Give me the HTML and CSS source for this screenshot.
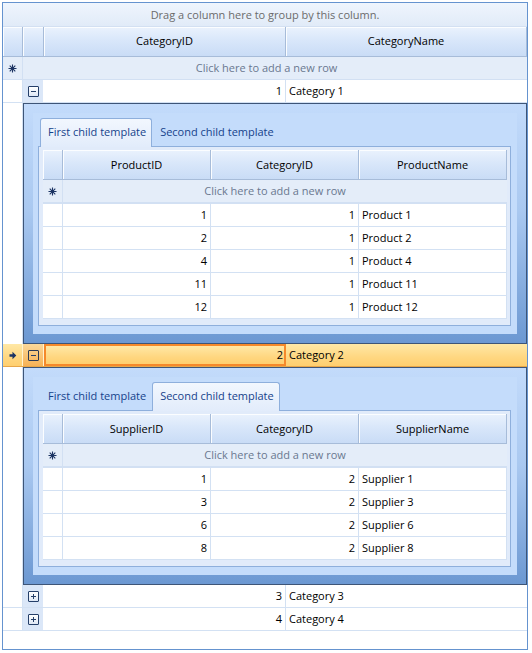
FILE: index.html
```html
<!DOCTYPE html>
<html>
<head>
<meta charset="utf-8">
<link rel="stylesheet" href="styles.css">
</head>
<body>
<div class="grid">
  <div class="group-panel">Drag a column here to group by this column.</div>

  <div class="row hdr">
    <div class="c"></div><div class="c"></div><div class="c">CategoryID</div><div class="c">CategoryName</div>
  </div>

  <div class="row newrow">
    <div class="c ind"><svg class="ast" width="9" height="9" viewBox="0 0 9 9"><path d="M4.5 0.5v8M0.5 4.5h8M1.7 1.7l5.6 5.6M7.3 1.7l-5.6 5.6" stroke="#1c3463" stroke-width="1.1"/><circle cx="4.5" cy="4.5" r="1.3" fill="#1c3463"/></svg></div>
    <div class="c span">Click here to add a new row</div>
  </div>

  <div class="row data">
    <div class="c ind"></div>
    <div class="c exp"><span class="box minus"></span></div>
    <div class="c num">1</div>
    <div class="c txt">Category 1</div>
  </div>

  <div class="detail-row">
    <div class="ind"></div>
    <div class="detail">
      <div class="panel">
        <div class="tabs">
          <div class="tab sel">First child template</div>
          <div class="tab">Second child template</div>
        </div>
        <div class="page">
          <div class="cgrid">
            <div class="crow chdr"><div class="c"></div><div class="c">ProductID</div><div class="c">CategoryID</div><div class="c">ProductName</div></div>
            <div class="crow cnew"><div class="c ind"><svg class="ast" width="9" height="9" viewBox="0 0 9 9"><path d="M4.5 0.5v8M0.5 4.5h8M1.7 1.7l5.6 5.6M7.3 1.7l-5.6 5.6" stroke="#1c3463" stroke-width="1.1"/><circle cx="4.5" cy="4.5" r="1.3" fill="#1c3463"/></svg></div><div class="c span">Click here to add a new row</div></div>
            <div class="crow cdata"><div class="c"></div><div class="c num">1</div><div class="c num">1</div><div class="c txt">Product 1</div></div>
            <div class="crow cdata"><div class="c"></div><div class="c num">2</div><div class="c num">1</div><div class="c txt">Product 2</div></div>
            <div class="crow cdata"><div class="c"></div><div class="c num">4</div><div class="c num">1</div><div class="c txt">Product 4</div></div>
            <div class="crow cdata"><div class="c"></div><div class="c num">11</div><div class="c num">1</div><div class="c txt">Product 11</div></div>
            <div class="crow cdata"><div class="c"></div><div class="c num">12</div><div class="c num">1</div><div class="c txt">Product 12</div></div>
          </div>
        </div>
      </div>
    </div>
  </div>

  <div class="row data selected">
    <div class="c ind"><svg width="8" height="9" viewBox="0 0 8 9"><path d="M0.5 3.3h3V0.8L7.3 4.5 3.5 8.2V5.7h-3z" fill="#1c3463"/></svg></div>
    <div class="c exp"><span class="box minus"></span></div>
    <div class="c num current">2</div>
    <div class="c txt">Category 2</div>
  </div>

  <div class="detail-row">
    <div class="ind"></div>
    <div class="detail">
      <div class="panel">
        <div class="tabs">
          <div class="tab">First child template</div>
          <div class="tab sel">Second child template</div>
        </div>
        <div class="page">
          <div class="cgrid">
            <div class="crow chdr"><div class="c"></div><div class="c">SupplierID</div><div class="c">CategoryID</div><div class="c">SupplierName</div></div>
            <div class="crow cnew"><div class="c ind"><svg class="ast" width="9" height="9" viewBox="0 0 9 9"><path d="M4.5 0.5v8M0.5 4.5h8M1.7 1.7l5.6 5.6M7.3 1.7l-5.6 5.6" stroke="#1c3463" stroke-width="1.1"/><circle cx="4.5" cy="4.5" r="1.3" fill="#1c3463"/></svg></div><div class="c span">Click here to add a new row</div></div>
            <div class="crow cdata"><div class="c"></div><div class="c num">1</div><div class="c num">2</div><div class="c txt">Supplier 1</div></div>
            <div class="crow cdata"><div class="c"></div><div class="c num">3</div><div class="c num">2</div><div class="c txt">Supplier 3</div></div>
            <div class="crow cdata"><div class="c"></div><div class="c num">6</div><div class="c num">2</div><div class="c txt">Supplier 6</div></div>
            <div class="crow cdata"><div class="c"></div><div class="c num">8</div><div class="c num">2</div><div class="c txt">Supplier 8</div></div>
          </div>
        </div>
      </div>
    </div>
  </div>

  <div class="row data">
    <div class="c ind"></div>
    <div class="c exp"><span class="box plus"></span></div>
    <div class="c num">3</div>
    <div class="c txt">Category 3</div>
  </div>
  <div class="row data">
    <div class="c ind"></div>
    <div class="c exp"><span class="box plus"></span></div>
    <div class="c num">4</div>
    <div class="c txt">Category 4</div>
  </div>
</div>
</body>
</html>
```

FILE: styles.css
```css
* { box-sizing: border-box; }
body {
  margin: 0;
  background: #fff;
  font-family: "Open Sans", "Liberation Sans", Arial, sans-serif;
  font-size: 11px;
  color: #000;
}
.grid {
  margin: 2px 0 0 2px;
  width: 526px;
  height: 648px;
  border: 1px solid #6593cf;
  background: #fff;
  overflow: hidden;
}
.group-panel {
  height: 24px;
  line-height: 23px;
  text-align: center;
  color: #6b6b6b;
  background: linear-gradient(#eff5fd, #e1ebf8);
  border-bottom: 1px solid #d3e0f2;
}
.row {
  display: grid;
  grid-template-columns: 20px 21px 242px 241px;
}
.c {
  overflow: hidden;
  white-space: nowrap;
}
.hdr { height: 30px; }
.hdr .c {
  background: linear-gradient(#eaf2fd, #d9e7fa 45%, #c9dcf6);
  border-right: 1px solid #a7bcd9;
  border-bottom: 1px solid #a7bcd9;
  box-shadow: inset 1px 1px 0 #fbfdff;
  text-align: center;
  line-height: 28px;
}
.newrow { height: 23px; border-bottom: 1px solid #d2e0f3; }
.newrow .c { background: #e4edf9; line-height: 22px; }
.newrow .ind { border-right: 1px solid #d2e0f3; display: flex; align-items: center; justify-content: center; }
.span { grid-column: 2 / 5; text-align: center; color: #6a7890; padding-right: 17px; }
.data { height: 23px; border-bottom: 1px solid #d3e1f3; }
.data .c { line-height: 22px; }
.data .ind { border-right: 1px solid #d3e1f3; display: flex; align-items: center; justify-content: center; }
.data .exp {
  background: #dbe7f8;
  border-right: 1px solid #fff;
  display: flex; align-items: center; justify-content: center;
}
.num { text-align: right; padding-right: 3px; border-right: 1px solid #d3e1f3; }
.txt { padding-left: 3px; }
.box {
  width: 11px; height: 11px;
  border: 1px solid #253f69;
  border-radius: 1px;
  background: linear-gradient(#ffffff, #dfe8f5);
  position: relative;
}
.box::before {
  content: "";
  position: absolute;
  left: 2px; top: 4px; width: 5px; height: 1px;
  background: #253f69;
}
.plus::after {
  content: "";
  position: absolute;
  left: 4px; top: 2px; width: 1px; height: 5px;
  background: #253f69;
}
.selected { border-bottom: 1px solid #e7a649; }
.selected .c {
  background: linear-gradient(#ffe8a6, #ffd781 60%, #ffcf6f);
}
.selected .ind { border-right: 1px solid #fff3d0; }
.selected .exp {
  background: linear-gradient(#fbd89a, #f7b256);
  border-right: 1px solid #fff3d0;
}
.selected .box { background: transparent; border-color: #2d3b55; }
.selected .current {
  border: 2px solid #f5892b;
  line-height: 18px;
  padding-right: 1px;
}
.detail-row {
  display: grid;
  grid-template-columns: 20px 504px;
}
.detail-row .ind { border-right: 1px solid #d3e1f3; }
.detail {
  border: 1px solid #3e5577;
  padding: 9px;
  background: linear-gradient(#c3dbfb 0%, #a9c8f0 45%, #6c98d2 100%);
}
.panel {
  background: #c4dcfb;
  padding: 5px 6px 8px 5px;
}
.tabs {
  display: flex;
  height: 28px;
  padding-left: 2px;
  position: relative;
  z-index: 1;
}
.tab {
  padding: 0 5px 0 7px;
  line-height: 26px;
  color: #15428b;
  border: 1px solid transparent;
  border-bottom: none;
  border-radius: 3px 3px 0 0;
}
.tab.sel {
  background: linear-gradient(#f2f7fe, #e2ecfb);
  border-color: #8eafdc;
  height: 29px;
}
.page {
  border: 1px solid #8eafdc;
  background: #e1ebfa;
  padding: 3px 3px 6px 4px;
}
.cgrid {
  width: 464px;
  background: #fff;
}
.crow {
  display: grid;
  grid-template-columns: 20px 148px 148px 148px;
}
.chdr { height: 30px; }
.chdr .c {
  background: linear-gradient(#eaf2fd, #d9e7fa 45%, #c9dcf6);
  border-right: 1px solid #a7bcd9;
  border-bottom: 1px solid #a7bcd9;
  box-shadow: inset 1px 1px 0 #fbfdff;
  text-align: center;
  line-height: 29px;
}
.cnew { height: 24px; border-bottom: 2px solid #d2e0f3; }
.cnew .c { background: #e4edf9; line-height: 22px; }
.cnew .ind { border-right: 1px solid #d2e0f3; display: flex; align-items: center; justify-content: center; }
.cnew .span { grid-column: 2 / 5; padding-right: 20px; }
.cdata { height: 23px; border-bottom: 1px solid #d3e1f3; }
.cdata .c { line-height: 21px; }
.cdata .c:first-child { border-right: 1px solid #d3e1f3; }
.cdata .c:last-child { border-right: 1px solid #d3e1f3; }
```
